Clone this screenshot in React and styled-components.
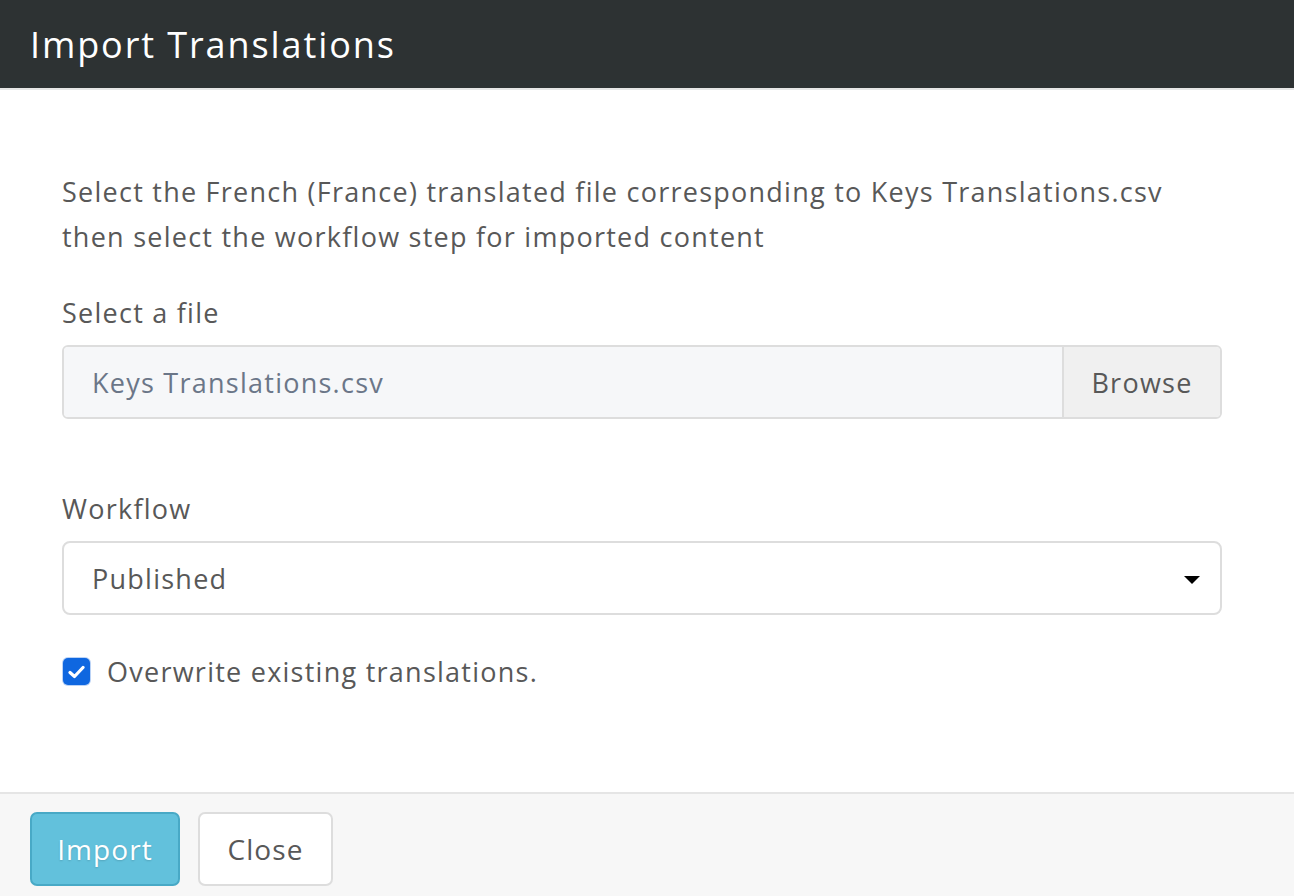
import React from 'react';
import styled, { createGlobalStyle } from 'styled-components';

const GlobalStyle = createGlobalStyle`
  html, body {
    margin: 0;
    padding: 0;
    background: #ffffff;
  }
  body {
    font-family: 'Open Sans', 'Liberation Sans', sans-serif;
    color: #585858;
  }
`;

const Modal = styled.div`
  display: flex;
  flex-direction: column;
  width: 1294px;
  height: 896px;
  overflow: hidden;
`;

const Header = styled.header`
  height: 88px;
  display: flex;
  align-items: center;
  padding: 0 30px;
  background: #2d3233;
  border-bottom: 2px solid #e6e6e6;
`;

const Title = styled.h1`
  margin: 0;
  font-size: 36px;
  font-weight: 400;
  color: #ffffff;
  letter-spacing: 1.9px;
`;

const Body = styled.main`
  flex: 1;
  padding: 79px 72px 0 62px;
  display: flex;
  flex-direction: column;
  font-size: 27px;
  letter-spacing: 1.25px;
`;

const Intro = styled.p`
  margin: 0 0 32px;
  line-height: 45px;
  color: #585858;
`;

const Label = styled.label`
  display: block;
  line-height: 44px;
  margin-bottom: 10px;
  color: #585858;
`;

const Field = styled.div`
  margin-bottom: ${props => props.spacing || 0}px;
`;

const InputGroup = styled.div`
  display: flex;
  height: 74px;
  box-sizing: border-box;
  border: 2px solid #dddddd;
  border-radius: 6px;
  overflow: hidden;
`;

const FileName = styled.div`
  flex: 1;
  display: flex;
  align-items: center;
  padding-left: 28px;
  background: #f6f7f9;
  color: #6b7688;
`;

const BrowseButton = styled.button`
  width: 158px;
  border: none;
  border-left: 2px solid #dddddd;
  background: #f0f0f0;
  color: #585858;
  font-family: inherit;
  font-size: inherit;
  letter-spacing: inherit;
  padding: 0;
`;

const Select = styled.div`
  height: 74px;
  box-sizing: border-box;
  border: 2px solid #dddddd;
  border-radius: 8px;
  display: flex;
  align-items: center;
  justify-content: space-between;
  padding: 0 20px 0 28px;
  background: #ffffff;
  color: #585858;
`;

const Caret = styled.span`
  width: 0;
  height: 0;
  border-left: 8px solid transparent;
  border-right: 8px solid transparent;
  border-top: 8px solid #000000;
  margin-top: 4px;
`;

const CheckRow = styled.label`
  display: flex;
  align-items: center;
  gap: 17px;
  margin-top: 38px;
  color: #585858;
`;

const Checkbox = styled.span`
  width: 27px;
  height: 27px;
  margin-left: 1px;
  border-radius: 5px;
  background: #0f67e0;
  display: flex;
  align-items: center;
  justify-content: center;
  box-shadow: 0 0 0 1px rgba(60, 130, 230, 0.35);
`;

const Footer = styled.footer`
  height: 104px;
  box-sizing: border-box;
  border-top: 2px solid #e5e5e5;
  background: #f7f7f7;
  padding: 18px 30px 0;
  display: flex;
  align-items: flex-start;
  gap: 18px;
`;

const Button = styled.button`
  height: 74px;
  width: ${props => props.width}px;
  box-sizing: border-box;
  border-radius: 7px;
  border: 2px solid ${props => (props.primary ? '#48a9c6' : '#dddddd')};
  background: ${props => (props.primary ? '#62c1dc' : '#ffffff')};
  color: ${props => (props.primary ? '#ffffff' : '#585858')};
  font-family: inherit;
  font-size: 28px;
  letter-spacing: 1.1px;
  padding: 0;
  text-shadow: ${props => (props.primary ? '0 1px 2px rgba(0,0,0,0.15)' : 'none')};
`;

const App = () => {
  return (
    <>
      <GlobalStyle />
      <Modal>
        <Header>
          <Title>Import Translations</Title>
        </Header>
        <Body>
          <Intro>
            Select the French (France) translated file corresponding to Keys Translations.csv
            <br />
            then select the workflow step for imported content
          </Intro>
          <Field spacing={68}>
            <Label>Select a file</Label>
            <InputGroup>
              <FileName>Keys Translations.csv</FileName>
              <BrowseButton>Browse</BrowseButton>
            </InputGroup>
          </Field>
          <Field>
            <Label>Workflow</Label>
            <Select>
              <span>Published</span>
              <Caret />
            </Select>
          </Field>
          <CheckRow>
            <Checkbox>
              <svg width="17" height="14" viewBox="0 0 17 14">
                <path d="M2 7.5 L6.5 11.5 L15 2.5" fill="none" stroke="#ffffff" strokeWidth="3.2" strokeLinecap="round" strokeLinejoin="round" />
              </svg>
            </Checkbox>
            Overwrite existing translations.
          </CheckRow>
        </Body>
        <Footer>
          <Button primary width={150}>Import</Button>
          <Button width={135}>Close</Button>
        </Footer>
      </Modal>
    </>
  );
};

export default App;
